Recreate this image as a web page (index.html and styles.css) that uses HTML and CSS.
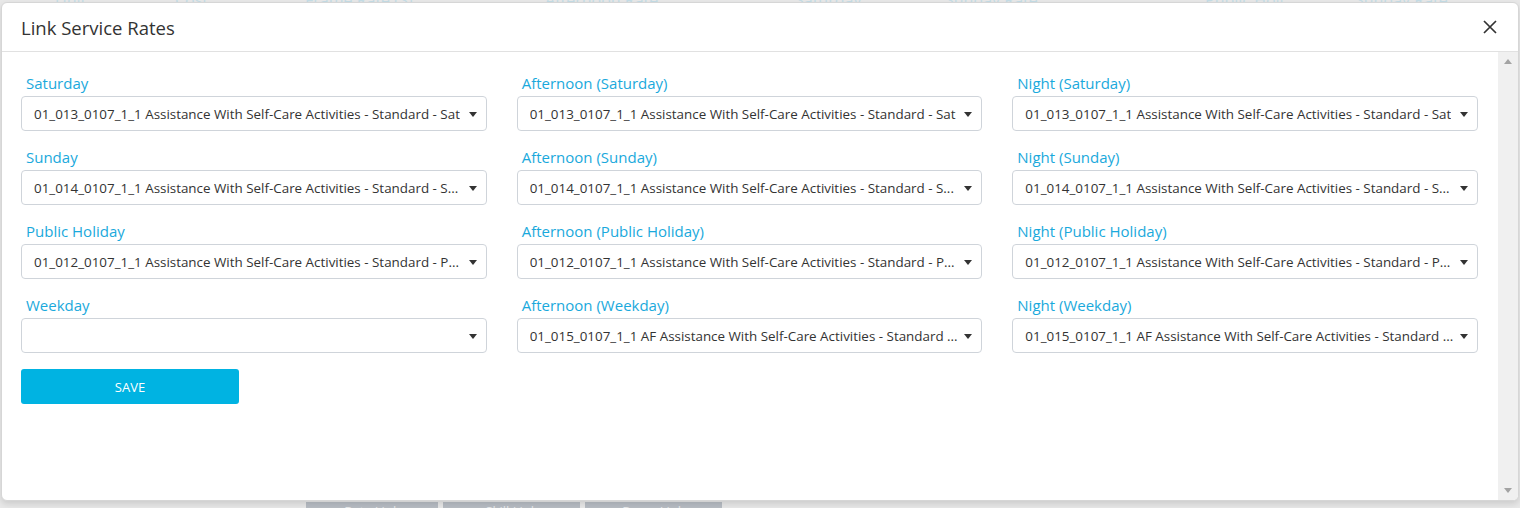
FILE: index.html
```html
<!DOCTYPE html>
<html lang="en">

<head>
    <meta charset="UTF-8">
    <meta name="viewport" content="width=device-width, initial-scale=1.0">
    <title>Link Service Rates</title>
    <link rel="stylesheet" href="styles.css">
</head>

<body>
    <!-- Page behind the dialog -->
    <div class="page">
        <div class="page-head">
            <span style="width: 120px">Unit</span>
            <span style="width: 130px">Cost</span>
            <span style="width: 240px">Frame Rate (S)</span>
            <span style="width: 250px">Afternoon Rate</span>
            <span style="width: 150px">Saturday</span>
            <span style="width: 260px">Sunday Rate</span>
            <span style="width: 150px">Public Holi</span>
            <span style="width: 150px">Sunday Rate</span>
        </div>
        <div class="page-actions">
            <button class="page-btn" style="width: 132px">Rate Link</button>
            <button class="page-btn" style="width: 137px">Skill Link</button>
            <button class="page-btn" style="width: 137px">Payer Link</button>
        </div>
    </div>

    <!-- Dialog -->
    <div class="modal">
        <div class="modal-header">
            <h4 class="modal-title">Link Service Rates</h4>
            <button class="close" aria-label="Close">
                <svg width="14" height="14" viewBox="0 0 14 14">
                    <path d="M1 1 L13 13 M13 1 L1 13" stroke="#333" stroke-width="1.7" fill="none" />
                </svg>
            </button>
        </div>

        <div class="modal-body">
            <div class="modal-content">
                <div class="rates">
                    <div class="field">
                        <label>Saturday</label>
                        <div class="select"><span>01_013_0107_1_1 Assistance With Self-Care Activities - Standard - Sat</span></div>
                    </div>
                    <div class="field">
                        <label>Afternoon (Saturday)</label>
                        <div class="select"><span>01_013_0107_1_1 Assistance With Self-Care Activities - Standard - Sat</span></div>
                    </div>
                    <div class="field">
                        <label>Night (Saturday)</label>
                        <div class="select"><span>01_013_0107_1_1 Assistance With Self-Care Activities - Standard - Sat</span></div>
                    </div>

                    <div class="field">
                        <label>Sunday</label>
                        <div class="select"><span>01_014_0107_1_1 Assistance With Self-Care Activities - Standard - S...</span></div>
                    </div>
                    <div class="field">
                        <label>Afternoon (Sunday)</label>
                        <div class="select"><span>01_014_0107_1_1 Assistance With Self-Care Activities - Standard - S...</span></div>
                    </div>
                    <div class="field">
                        <label>Night (Sunday)</label>
                        <div class="select"><span>01_014_0107_1_1 Assistance With Self-Care Activities - Standard - S...</span></div>
                    </div>

                    <div class="field">
                        <label>Public Holiday</label>
                        <div class="select"><span>01_012_0107_1_1 Assistance With Self-Care Activities - Standard - P...</span></div>
                    </div>
                    <div class="field">
                        <label>Afternoon (Public Holiday)</label>
                        <div class="select"><span>01_012_0107_1_1 Assistance With Self-Care Activities - Standard - P...</span></div>
                    </div>
                    <div class="field">
                        <label>Night (Public Holiday)</label>
                        <div class="select"><span>01_012_0107_1_1 Assistance With Self-Care Activities - Standard - P...</span></div>
                    </div>

                    <div class="field">
                        <label>Weekday</label>
                        <div class="select"><span></span></div>
                    </div>
                    <div class="field">
                        <label>Afternoon (Weekday)</label>
                        <div class="select"><span>01_015_0107_1_1 AF Assistance With Self-Care Activities - Standard ...</span></div>
                    </div>
                    <div class="field">
                        <label>Night (Weekday)</label>
                        <div class="select"><span>01_015_0107_1_1 AF Assistance With Self-Care Activities - Standard ...</span></div>
                    </div>
                </div>

                <button class="btn-save">SAVE</button>
            </div>

            <!-- Scrollbar -->
            <div class="scrollbar">
                <span class="arrow-up"></span>
                <span class="arrow-down"></span>
            </div>
        </div>
    </div>
</body>
</html>
```

FILE: styles.css
```css
body {
    font-family: 'Open Sans', 'Noto Sans', sans-serif;
    margin: 0;
    padding: 0;
    background-color: #e8e8e8;
    color: #333333;
    width: 1520px;
    height: 508px;
    overflow: hidden;
    position: relative;
}

/* Page behind the dialog */
.page {
    height: 508px;
    display: flex;
    flex-direction: column;
    justify-content: space-between;
}

.page-head {
    display: flex;
    margin-top: -11px;
    padding-left: 55px;
    font-size: 16px;
    color: #c5dde6;
}

.page-actions {
    display: flex;
    gap: 5px;
    padding-left: 306px;
    margin-bottom: -12px;
}

.page-btn {
    height: 18px;
    border: none;
    background-color: #b7bcc3;
    color: #e6e8ea;
    font-family: 'Open Sans', sans-serif;
    font-size: 13px;
    padding: 0;
}

/* Dialog */
.modal {
    position: absolute;
    left: 1px;
    top: 2px;
    width: 1516px;
    height: 497px;
    background-color: #FFFFFF;
    border: 1px solid #d6d6d6;
    border-radius: 6px;
    box-shadow: 0 3px 6px rgba(0, 0, 0, 0.12);
    display: flex;
    flex-direction: column;
    overflow: hidden;
}

.modal-header {
    display: flex;
    align-items: center;
    justify-content: space-between;
    height: 48px;
    padding: 0 21px 0 19px;
    border-bottom: 1px solid #e1e1e1;
}

.modal-title {
    margin: 0;
    font-size: 18.5px;
    font-weight: normal;
    color: #333333;
}

.close {
    border: none;
    background: none;
    padding: 0;
    cursor: pointer;
    display: flex;
}

.modal-body {
    flex: 1;
    display: flex;
}

.modal-content {
    flex: 1;
    padding: 20px 20px 0 19px;
}

.rates {
    display: grid;
    grid-template-columns: repeat(3, 1fr);
    column-gap: 30px;
    row-gap: 15px;
}

.field label {
    display: block;
    height: 22px;
    line-height: 22px;
    margin-bottom: 2px;
    padding-left: 5px;
    font-size: 15px;
    color: #1aa9dc;
}

.select {
    position: relative;
    height: 33px;
    border: 1px solid #cfd4da;
    border-radius: 4px;
    padding: 0 22px 0 12px;
    display: flex;
    align-items: center;
    font-size: 13.4px;
    color: #333333;
}

.select span {
    white-space: nowrap;
    overflow: hidden;
    text-overflow: ellipsis;
}

.select::after {
    content: "";
    position: absolute;
    right: 9px;
    top: 15px;
    border-left: 4px solid transparent;
    border-right: 4px solid transparent;
    border-top: 5px solid #333333;
}

.btn-save {
    margin-top: 16px;
    width: 218px;
    height: 35px;
    border: none;
    border-radius: 3px;
    background-color: #00b3e2;
    color: #FFFFFF;
    font-family: 'Open Sans', sans-serif;
    font-size: 13px;
    cursor: pointer;
}

.scrollbar {
    width: 20px;
    background-color: #f0f0f0;
    display: flex;
    flex-direction: column;
    justify-content: space-between;
    align-items: center;
    padding: 7px 0 7px;
}

.arrow-up {
    border-left: 4px solid transparent;
    border-right: 4px solid transparent;
    border-bottom: 5px solid #a3a3a3;
}

.arrow-down {
    border-left: 4px solid transparent;
    border-right: 4px solid transparent;
    border-top: 5px solid #a3a3a3;
}
```
